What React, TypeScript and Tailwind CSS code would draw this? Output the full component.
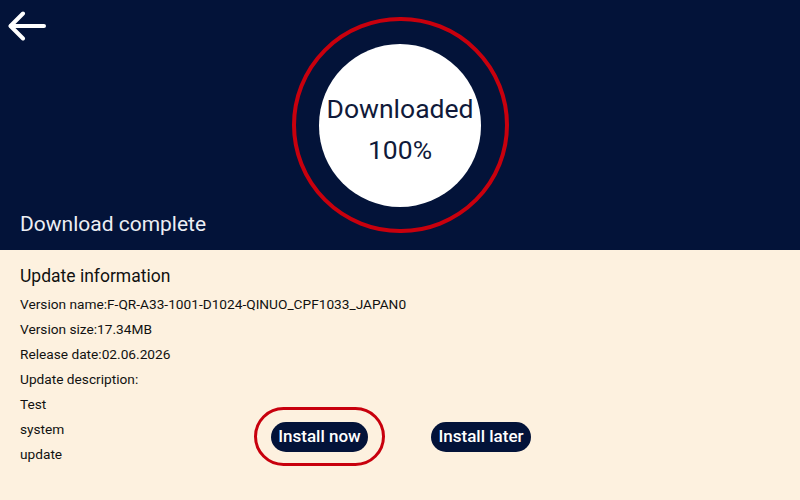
import React from 'react';

const infoLines = [
  'Version name:F-QR-A33-1001-D1024-QINUO_CPF1033_JAPAN0',
  'Version size:17.34MB',
  'Release date:02.06.2026',
  'Update description:',
];

const descLines = ['Test', 'system', 'update'];

const BackArrow = () => (
  <svg width="40" height="34" viewBox="0 0 40 34" fill="none" stroke="white" strokeWidth="4" strokeLinecap="round" strokeLinejoin="round">
    <path d="M36 16H3" />
    <path d="M15 3.5L2.5 16L15 28.5" />
  </svg>
);

export default function App() {
  return (
    <div className="w-[800px] h-[500px] flex flex-col overflow-hidden font-['Roboto',sans-serif]">
      {/* header */}
      <div className="h-[250px] bg-[#031339] grid grid-cols-[1fr_217px_1fr]">
        <div className="flex flex-col justify-between pt-[10px] pl-[8px] pb-[13px]">
          <BackArrow />
          <span className="pl-[12px] text-[21px] leading-[25px] text-[#eceef4]">Download complete</span>
        </div>
        <div className="pt-[17px]">
          <div className="w-[217px] h-[216px] rounded-full border-4 border-[#c8000d] flex items-center justify-center">
            <div className="w-[162px] h-[163px] rounded-full bg-white flex flex-col items-center justify-center text-[#101a3a] text-[26.5px] leading-[41px] pt-[7px]">
              <span>Downloaded</span>
              <span>100%</span>
            </div>
          </div>
        </div>
        <div />
      </div>

      {/* update info */}
      <div className="flex-1 bg-[#fdf1df] pl-[20px] pt-[14px] text-[#111111]">
        <div className="text-[17.5px] leading-[24px] mb-[4px]">Update information</div>
        {infoLines.map((line) => (
          <div key={line} className="text-[13.7px] leading-[25px]">{line}</div>
        ))}
        <div className="flex items-end">
          <div className="w-[234px] flex flex-col">
            {descLines.map((line) => (
              <div key={line} className="text-[13.7px] leading-[25px]">{line}</div>
            ))}
          </div>
          <div className="flex items-center gap-[46px] mb-[1px]">
            <div className="rounded-full border-[3.5px] border-[#c8000d] px-[14px] py-[11.5px]">
              <button className="h-[30px] w-[97px] rounded-full bg-[#031339] text-white text-[17px] font-medium">
                Install now
              </button>
            </div>
            <button className="h-[30px] w-[100px] rounded-full bg-[#031339] text-white text-[17px] font-medium">
              Install later
            </button>
          </div>
        </div>
      </div>
    </div>
  );
}
